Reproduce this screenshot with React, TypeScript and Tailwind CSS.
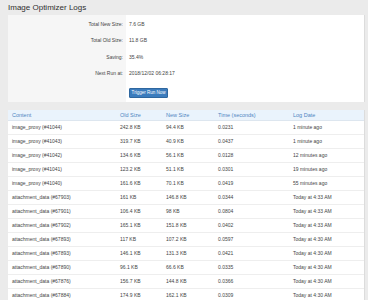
import React from "react";

const rows: [string, string, string, string, string][] = [
  ["image_proxy (#41044)", "242.8 KB", "94.4 KB", "0.0231", "1 minute ago"],
  ["image_proxy (#41043)", "319.7 KB", "40.9 KB", "0.0437", "1 minute ago"],
  ["image_proxy (#41042)", "134.6 KB", "56.1 KB", "0.0128", "12 minutes ago"],
  ["image_proxy (#41041)", "123.2 KB", "51.1 KB", "0.0301", "19 minutes ago"],
  ["image_proxy (#41040)", "161.6 KB", "70.1 KB", "0.0419", "55 minutes ago"],
  ["attachment_data (#67903)", "161 KB", "146.8 KB", "0.0344", "Today at 4:33 AM"],
  ["attachment_data (#67901)", "106.4 KB", "98 KB", "0.0804", "Today at 4:33 AM"],
  ["attachment_data (#67902)", "165.1 KB", "151.8 KB", "0.0402", "Today at 4:33 AM"],
  ["attachment_data (#67893)", "117 KB", "107.2 KB", "0.0597", "Today at 4:30 AM"],
  ["attachment_data (#67893)", "146.1 KB", "131.3 KB", "0.0421", "Today at 4:30 AM"],
  ["attachment_data (#67890)", "96.1 KB", "66.6 KB", "0.0335", "Today at 4:30 AM"],
  ["attachment_data (#67876)", "156.7 KB", "144.8 KB", "0.0366", "Today at 4:30 AM"],
  ["attachment_data (#67884)", "174.9 KB", "162.1 KB", "0.0309", "Today at 4:30 AM"],
];

const info: [string, string][] = [
  ["Total New Size:", "7.6 GB"],
  ["Total Old Size:", "11.8 GB"],
  ["Saving:", "35.4%"],
  ["Next Run at:", "2018/12/02 06:28:17"],
];

const grid = "grid grid-cols-[108px_46px_52px_75px_1fr]";

export default function App() {
  return (
    <div
      className="w-[368px] h-[300px] overflow-hidden bg-[#ebebeb] pl-[8px] pr-[3px]"
      style={{ fontFamily: '"Liberation Sans", Arial, sans-serif' }}
    >
      <div className="h-[15px] flex items-center text-[8px] leading-none text-[#2f2f2f]">
        Image Optimizer Logs
      </div>
      <div className="bg-white border-r border-[#dcdcdc] flex">
        <div className="w-[118px] bg-[#f6f6f6] flex flex-col pt-[1px] pb-[4px]">
          {info.map(([l]) => (
            <div key={l} className="h-[16.5px] flex items-center justify-end pr-[3px] text-[5px] text-[#444]">
              {l}
            </div>
          ))}
          <div className="h-[16px]" />
        </div>
        <div className="flex-1 flex flex-col pt-[1px] pb-[4px] pl-[3px]">
          {info.map(([l, v]) => (
            <div key={l} className="h-[16.5px] flex items-center text-[5px] text-[#444]">
              {v}
            </div>
          ))}
          <div className="mt-[6px] h-[10px] w-[39px] bg-[#3c7cbd] border border-[#2f679f] rounded-[1px] flex items-center justify-center text-[4.5px] text-white">
            Trigger Run Now
          </div>
        </div>
      </div>
      <div className="mt-[8px] bg-white border-r border-[#dcdcdc]">
        <div className={`${grid} h-[11px] items-center bg-[#eaf3fc] text-[5.5px] text-[#4f86c2] border-b border-[#dde6ef]`}>
          <div className="pl-[4px]">Content</div>
          <div className="pl-[4px]">Old Size</div>
          <div className="pl-[4px]">New Size</div>
          <div className="pl-[4px]">Time (seconds)</div>
          <div className="pl-[4px]">Log Date</div>
        </div>
        {rows.map((r, i) => (
          <div key={i} className={`${grid} h-[14px] items-center text-[5px] text-[#444] border-b border-[#eeeeee]`}>
            {r.map((c, j) => (
              <div key={j} className="pl-[4px] whitespace-nowrap">
                {c}
              </div>
            ))}
          </div>
        ))}
      </div>
    </div>
  );
}
